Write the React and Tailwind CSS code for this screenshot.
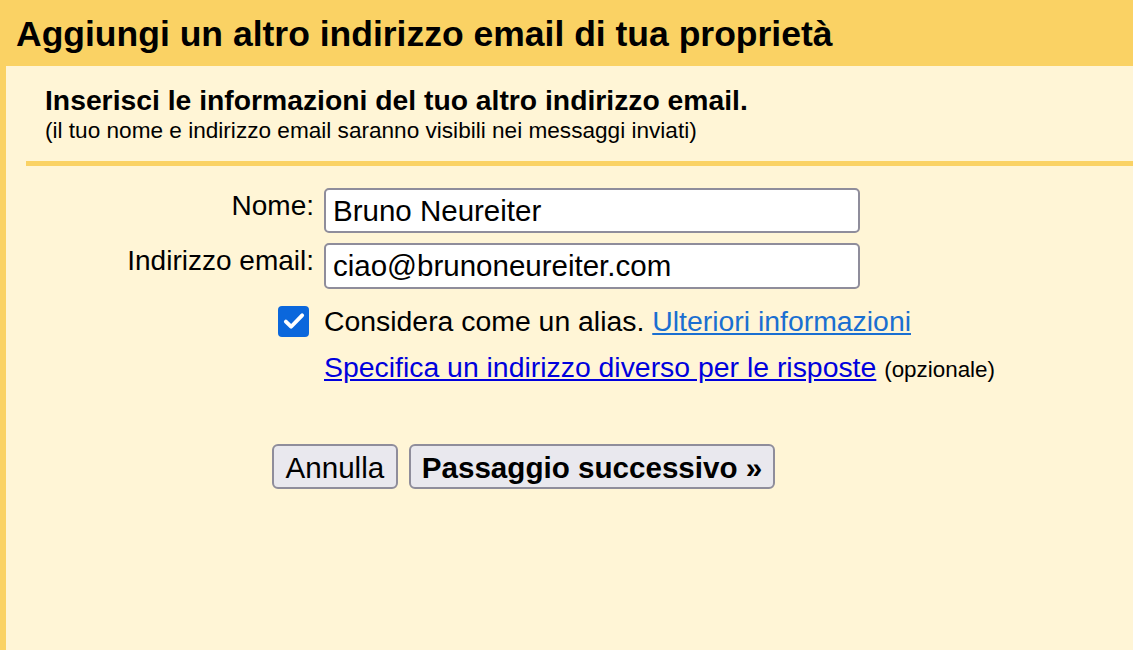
import React from "react";

export default function App() {
  return (
    <div className="w-[1133px] h-[650px] overflow-hidden flex flex-col bg-[#fff5d6] text-black font-['Liberation_Sans',Arial,sans-serif]">
      <div className="h-[66px] shrink-0 bg-[#fad264] pl-[16px] pt-[14px]">
        <h1 className="text-[35.5px] leading-[40px] font-bold">
          Aggiungi un altro indirizzo email di tua proprietà
        </h1>
      </div>
      <div className="flex-1 border-l-[6px] border-[#fad264] flex flex-col">
        <div className="pl-[39px] pt-[22px]">
          <div className="text-[28.3px] leading-[24px] font-bold">
            Inserisci le informazioni del tuo altro indirizzo email.
          </div>
          <div className="mt-[8px] text-[22.6px] leading-[22px]">
            (il tuo nome e indirizzo email saranno visibili nei messaggi inviati)
          </div>
        </div>
        <div className="ml-[20px] mt-[19px] h-[5px] bg-[#fad264]" />
        <div className="mt-[22px] grid grid-cols-[308px_536px] gap-x-[10px] gap-y-[10px] text-[28px] leading-[32px]">
          <label className="text-right pt-[2px]">Nome:</label>
          <div className="h-[45px] rounded-[5px] border-2 border-[#8f8d9b] bg-white px-[7px] flex items-center text-[29.5px]">
            Bruno Neureiter
          </div>
          <label className="text-right pt-[2px]">Indirizzo email:</label>
          <div className="h-[46px] rounded-[5px] border-2 border-[#8f8d9b] bg-white px-[7px] flex items-center text-[29.5px]">
            ciao@brunoneureiter.com
          </div>
        </div>
        <div className="ml-[272px] mt-[16px] flex items-center gap-[15px] text-[28.4px] leading-[32px]">
          <div className="w-[31px] h-[31px] rounded-[4px] bg-[#0b67dc] flex items-center justify-center">
            <svg width="26" height="26" viewBox="0 0 24 24" fill="none">
              <path d="M4.5 12.5l4.8 4.8L19.5 6.8" stroke="white" strokeWidth="3.6" strokeLinecap="round" strokeLinejoin="round" />
            </svg>
          </div>
          <div>
            Considera come un alias.{" "}
            <span className="text-[#1a6fd1] underline">Ulteriori informazioni</span>
          </div>
        </div>
        <div className="ml-[318px] mt-[14px] text-[28.4px] leading-[32px]">
          <span className="text-[#0000dd] underline">Specifica un indirizzo diverso per le risposte</span>{" "}
          <span className="text-[22.4px]">(opzionale)</span>
        </div>
        <div className="ml-[266px] mt-[58px] flex gap-[11px] text-[29.6px]">
          <button className="h-[45px] px-[11.5px] rounded-[6px] border-2 border-[#8f8d9b] bg-[#e9e8ee]">
            Annulla
          </button>
          <button className="h-[45px] px-[11px] rounded-[6px] border-2 border-[#8f8d9b] bg-[#e9e8ee] font-bold">
            Passaggio successivo »
          </button>
        </div>
      </div>
    </div>
  );
}
